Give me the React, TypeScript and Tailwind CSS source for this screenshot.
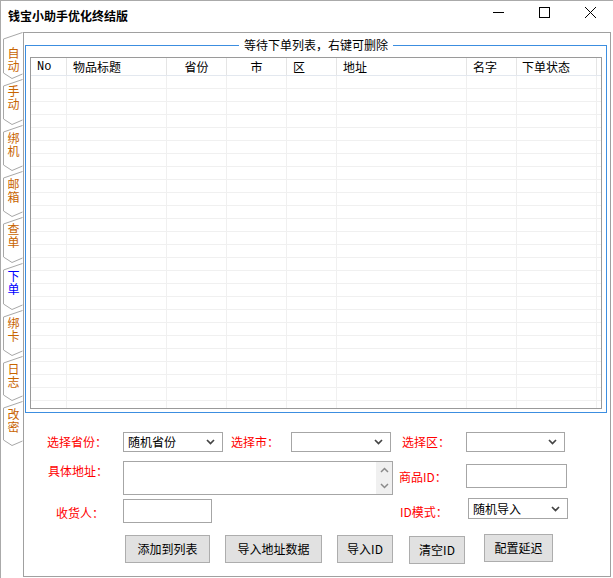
const tabs = [
  { label: "自动", h: "h-[47px]", pt: "pt-[15px]", hp: 47, active: false },
  { label: "手动", h: "h-[46px]", pt: "pt-[6px]", hp: 46, active: false },
  { label: "绑机", h: "h-[46px]", pt: "pt-[7px]", hp: 46, active: false },
  { label: "邮箱", h: "h-[46px]", pt: "pt-[7px]", hp: 46, active: false },
  { label: "查单", h: "h-[46px]", pt: "pt-[6px]", hp: 46, active: false },
  { label: "下单", h: "h-[47px]", pt: "pt-[7px]", hp: 47, active: true },
  { label: "绑卡", h: "h-[46px]", pt: "pt-[7px]", hp: 46, active: false },
  { label: "日志", h: "h-[45px]", pt: "pt-[7px]", hp: 45, active: false },
  { label: "改密", h: "h-[45px]", pt: "pt-[7px]", hp: 45, active: false },
];

const cols = [
  { label: "No", w: "w-[36px]", cls: "pl-[6px] font-['Liberation_Mono',monospace]" },
  { label: "物品标题", w: "w-[100px]", cls: "pl-[6px]" },
  { label: "省份", w: "w-[60px]", cls: "text-center" },
  { label: "市", w: "w-[60px]", cls: "text-center" },
  { label: "区", w: "w-[50px]", cls: "pl-[6px]" },
  { label: "地址", w: "w-[130px]", cls: "pl-[6px]" },
  { label: "名字", w: "w-[50px]", cls: "pl-[6px]" },
  { label: "下单状态", w: "w-[80px]", cls: "pl-[5px]" },
];

const rows = Array.from({ length: 26 }, (_, i) => i);

function Chevron({ color = "#444" }: { color?: string }) {
  return (
    <svg width="9" height="6" viewBox="0 0 9 6" className="shrink-0">
      <polyline points="1,1 4.5,4.5 8,1" fill="none" stroke={color} strokeWidth="1.7" />
    </svg>
  );
}

function Select({ w, h, value }: { w: string; h: string; value?: string }) {
  return (
    <div className={`${w} ${h} border border-[#a6a6a6] bg-white flex items-center pl-[4px] pr-[7px] justify-between`}>
      <span className="text-[12px] leading-[14px] text-black">{value ?? ""}</span>
      <Chevron />
    </div>
  );
}

function Btn({ label, w, mt }: { label: string; w: string; mt: string }) {
  return (
    <div
      className={`${w} ${mt} h-[28px] border border-[#adadad] bg-[#e1e1e1] flex items-center justify-center text-[12px] text-black`}
    >
      {label}
    </div>
  );
}

export default function App() {
  return (
    <div className="w-[613px] h-[578px] bg-white border-l border-t border-[#aaaaaa] overflow-hidden flex flex-col font-['Noto_Sans_CJK_SC','Liberation_Sans',sans-serif]">
      {/* title bar */}
      <div className="h-[31px] flex items-start shrink-0">
        <span className="ml-[7px] mt-[8px] text-[12px] leading-[14px] font-bold text-black">
          钱宝小助手优化终结版
        </span>
        <div className="ml-auto flex">
          <div className="w-[46px] h-[22px] flex items-center justify-center">
            <svg width="11" height="11" viewBox="0 0 11 11">
              <line x1="0" y1="5.5" x2="11" y2="5.5" stroke="#000" strokeWidth="1" />
            </svg>
          </div>
          <div className="w-[46px] h-[22px] flex items-center justify-center">
            <svg width="11" height="11" viewBox="0 0 11 11">
              <rect x="0.5" y="0.5" width="10" height="10" fill="none" stroke="#000" strokeWidth="1" />
            </svg>
          </div>
          <div className="w-[46px] h-[22px] flex items-center justify-center">
            <svg width="11" height="11" viewBox="0 0 11 11">
              <line x1="0" y1="0" x2="11" y2="11" stroke="#000" strokeWidth="1" />
              <line x1="11" y1="0" x2="0" y2="11" stroke="#000" strokeWidth="1" />
            </svg>
          </div>
        </div>
      </div>

      <div className="flex">
        {/* vertical tabs */}
        <div className="w-[22px] flex flex-col">
          {tabs.map((t, i) => (
            <div key={i} className={`relative ${t.h} ${t.pt} w-[22px] flex justify-center`}>
              <svg
                width="22"
                height={t.hp + 1}
                viewBox={`0 0 22 ${t.hp + 1}`}
                className="absolute left-0 top-0 overflow-visible"
              >
                <polyline
                  points={`21.5,0.5 2.5,7 2.5,${t.hp - 6} 11,${t.hp - 0.5} 21.5,${t.hp - 5}`}
                  fill="none"
                  stroke="#a8a8a8"
                  strokeWidth="1"
                />
              </svg>
              <span
                className={`relative ml-[2px] [writing-mode:vertical-rl] tracking-[1px] text-[12px] leading-[14px] ${
                  t.active ? "text-[#0000ff]" : "text-[#c86400]"
                }`}
              >
                {t.label}
              </span>
            </div>
          ))}
        </div>

        {/* tab panel */}
        <div className="w-[588px] h-[545px] border border-[#a0a0a0] bg-white flex flex-col">
          {/* group box */}
          <div className="relative ml-[1px] mt-[12px] w-[582px] h-[368px] border border-[#3c8ee0]">
            <span className="absolute left-1/2 -translate-x-1/2 -top-[8px] bg-white px-[5px] text-[12px] leading-[14px] text-black whitespace-nowrap">
              等待下单列表，右键可删除
            </span>
            <div className="ml-[4px] mt-[11px] w-[572px] h-[352px] border border-[#9a9a9a] overflow-hidden bg-white">
              <div className="flex h-[18px] border-b border-[#e3e8ef]">
                {cols.map((c) => (
                  <div
                    key={c.label}
                    className={`${c.w} ${c.cls} shrink-0 border-r border-[#e5e5e5] text-[12px] leading-[18px] text-black`}
                  >
                    {c.label}
                  </div>
                ))}
              </div>
              {rows.map((r) => (
                <div key={r} className="flex h-[13px] border-b border-[#f0f0f0]">
                  {cols.map((c) => (
                    <div key={c.label} className={`${c.w} shrink-0 border-r border-[#f0f0f0]`} />
                  ))}
                </div>
              ))}
            </div>
          </div>

          {/* form */}
          <div className="flex flex-col text-[12px] leading-[16px]">
            {/* row 1 */}
            <div className="flex items-center h-[20px] mt-[19px] pl-[23px]">
              <span className="w-[76px] text-[#ff0000]">选择省份：</span>
              <Select w="w-[100px]" h="h-[20px]" value="随机省份" />
              <span className="ml-[8px] w-[60px] text-[#ff0000]">选择市：</span>
              <Select w="w-[100px]" h="h-[20px]" />
              <span className="ml-[11px] w-[64px] text-[#ff0000]">选择区：</span>
              <Select w="w-[99px]" h="h-[20px]" />
            </div>

            {/* row 2 */}
            <div className="flex items-start h-[34px] mt-[9px] pl-[24px]">
              <span className="w-[75px] pt-[2px] text-[#ff0000]">具体地址：</span>
              <div className="w-[270px] h-[34px] border border-[#a6a6a6] bg-white flex justify-end">
                <div className="w-[16px] h-full bg-[#f0f0f0] flex flex-col items-center justify-between py-[5px]">
                  <svg width="9" height="6" viewBox="0 0 9 6">
                    <polyline points="1,5 4.5,1.5 8,5" fill="none" stroke="#8a8a8a" strokeWidth="1.5" />
                  </svg>
                  <svg width="9" height="6" viewBox="0 0 9 6">
                    <polyline points="1,1 4.5,4.5 8,1" fill="none" stroke="#8a8a8a" strokeWidth="1.5" />
                  </svg>
                </div>
              </div>
              <span className="ml-[6px] mt-[8px] w-[67px] text-[#ff0000]">商品ID：</span>
              <div className="mt-[3px] w-[101px] h-[24px] border border-[#a6a6a6] bg-white" />
            </div>

            {/* row 3 */}
            <div className="flex items-start h-[24px] mt-[3px] pl-[32px]">
              <span className="w-[67px] mt-[7px] text-[#ff0000]">收货人：</span>
              <div className="mt-[1px] w-[89px] h-[24px] border border-[#a6a6a6] bg-white" />
              <span className="ml-[188px] mt-[6px] w-[68px] text-[#ff0000]">ID模式：</span>
              <Select w="w-[100px]" h="h-[21px]" value="随机导入" />
            </div>

            {/* row 4 */}
            <div className="flex items-start mt-[12px] pl-[101px]">
              <Btn label="添加到列表" w="w-[85px]" mt="mt-[1px]" />
              <div className="ml-[15px]">
                <Btn label="导入地址数据" w="w-[97px]" mt="mt-[1px]" />
              </div>
              <div className="ml-[15px]">
                <Btn label="导入ID" w="w-[56px]" mt="mt-[1px]" />
              </div>
              <div className="ml-[16px]">
                <Btn label="清空ID" w="w-[56px]" mt="mt-[2px]" />
              </div>
              <div className="ml-[19px]">
                <Btn label="配置延迟" w="w-[69px]" mt="mt-[0px]" />
              </div>
            </div>
          </div>
        </div>
      </div>
    </div>
  );
}
